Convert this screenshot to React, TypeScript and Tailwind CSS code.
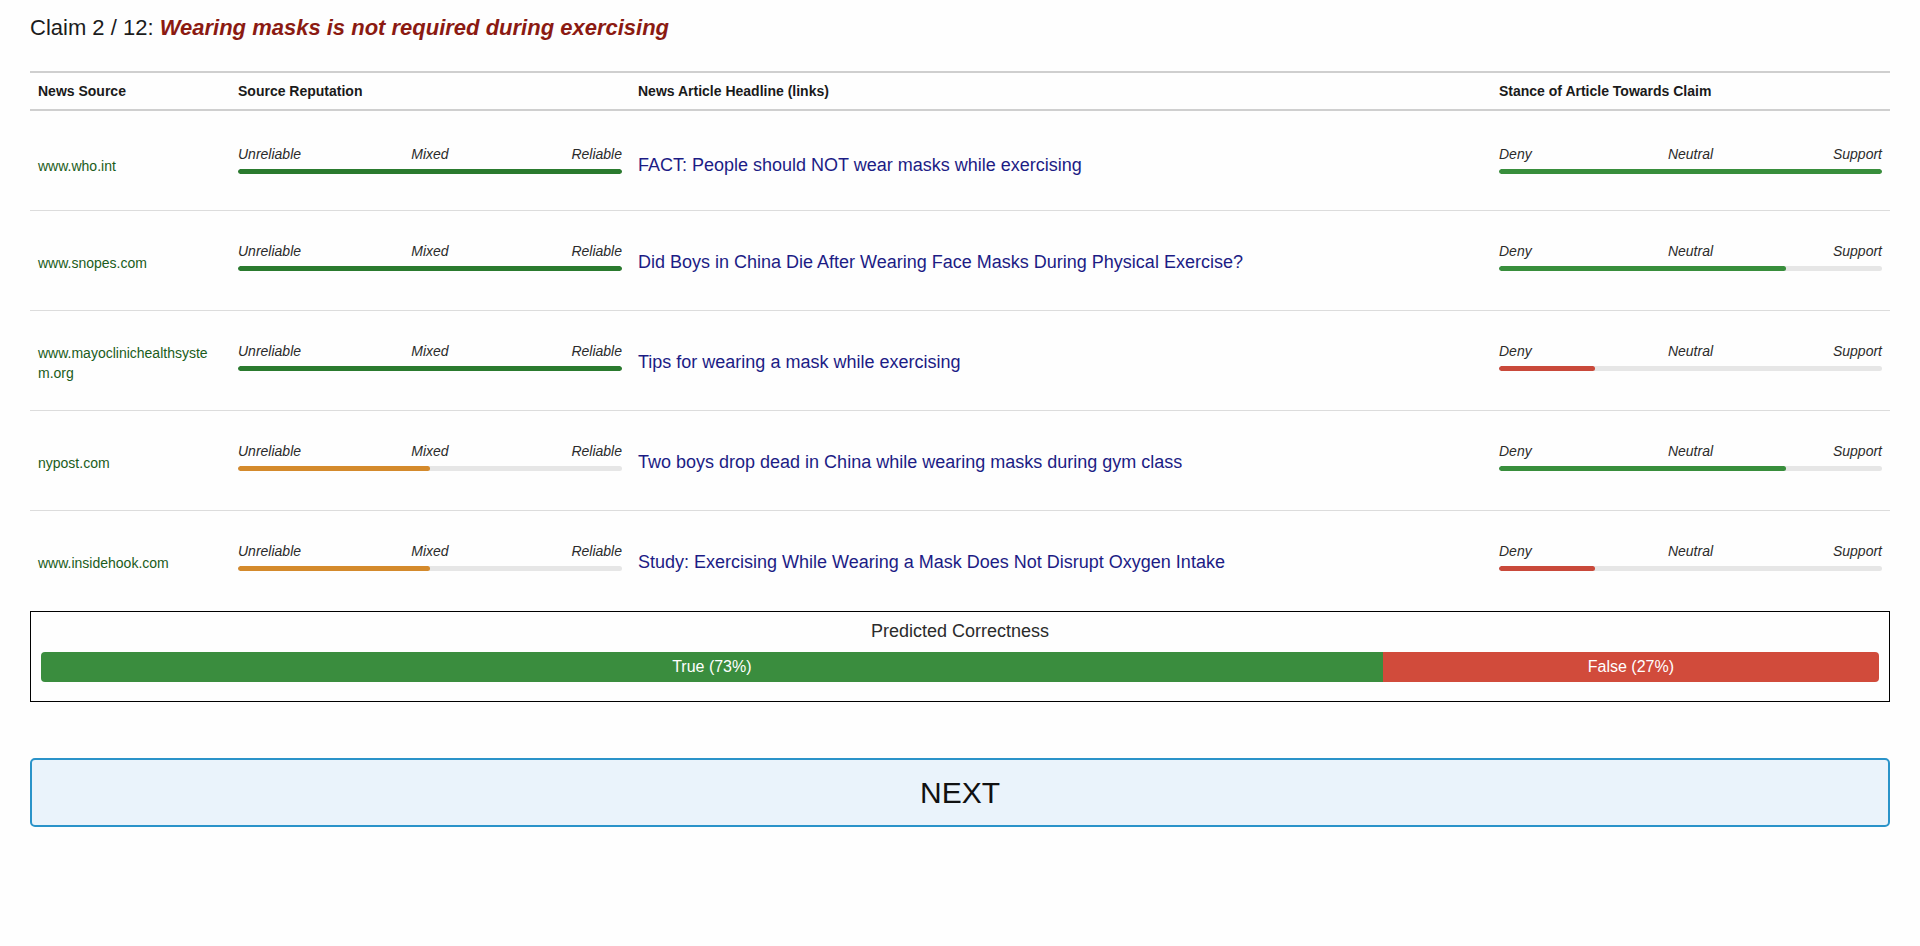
import { FC } from 'react'

type Row = {
  source: string
  headline: string
  reputation: number
  repColor: string
  stance: number
  stanceColor: string
}

const rows: Row[] = [
  {
    source: 'www.who.int',
    headline: 'FACT: People should NOT wear masks while exercising',
    reputation: 100,
    repColor: 'bg-[#2a7a2e]',
    stance: 100,
    stanceColor: 'bg-[#388e3c]',
  },
  {
    source: 'www.snopes.com',
    headline: 'Did Boys in China Die After Wearing Face Masks During Physical Exercise?',
    reputation: 100,
    repColor: 'bg-[#2a7a2e]',
    stance: 75,
    stanceColor: 'bg-[#388e3c]',
  },
  {
    source: 'www.mayoclinichealthsystem.org',
    headline: 'Tips for wearing a mask while exercising',
    reputation: 100,
    repColor: 'bg-[#2a7a2e]',
    stance: 25,
    stanceColor: 'bg-[#c9493a]',
  },
  {
    source: 'nypost.com',
    headline: 'Two boys drop dead in China while wearing masks during gym class',
    reputation: 50,
    repColor: 'bg-[#d48a2c]',
    stance: 75,
    stanceColor: 'bg-[#388e3c]',
  },
  {
    source: 'www.insidehook.com',
    headline: 'Study: Exercising While Wearing a Mask Does Not Disrupt Oxygen Intake',
    reputation: 50,
    repColor: 'bg-[#d48a2c]',
    stance: 25,
    stanceColor: 'bg-[#c9493a]',
  },
]

// three labels: left, centred on the middle of the bar, right
const Scale: FC<{ labels: [string, string, string]; value: number; color: string }> = ({ labels, value, color }) => (
  <div className="w-full mb-[8px]">
    <div className="grid grid-cols-[1fr_auto_1fr] text-[14px] leading-4 italic text-[#2b2b2b]">
      <span className="justify-self-start">{labels[0]}</span>
      <span>{labels[1]}</span>
      <span className="justify-self-end">{labels[2]}</span>
    </div>
    <div className="mt-[7px] h-[5px] w-full rounded-sm bg-[#e6e6e6] overflow-hidden">
      <div
        className={`h-full rounded-sm ${color}`}
        style={{ width: `${value}%` }}
      />
    </div>
  </div>
)

const App: FC = () => {
  return (
    <div className="min-h-[946px] bg-[#fefefe] px-[30px] pt-[15px] font-['Liberation_Sans',Arial,sans-serif] text-[#222]">
      <h1 className="text-[22px] leading-[25px] text-[#1c1c1c]">
        Claim 2 / 12:{' '}
        <span className="font-bold italic text-[#8b1a12]">Wearing masks is not required during exercising</span>
      </h1>

      <div className="mt-[31px]">
        <div className="grid grid-cols-[200px_400px_1fr_399px] border-y-2 border-[#cfcfcf] h-[40px] items-center text-[14px] font-bold text-[#1a1a1a]">
          <div className="px-2">News Source</div>
          <div className="px-2">Source Reputation</div>
          <div className="px-2">News Article Headline (links)</div>
          <div className="px-2">Stance of Article Towards Claim</div>
        </div>

        {rows.map((row, i) => (
          <div
            key={row.source}
            className={`grid grid-cols-[200px_400px_1fr_399px] items-center h-[100px] ${
              i < rows.length - 1 ? 'border-b border-[#dcdcdc]' : ''
            } ${i === 0 ? 'pt-[6px]' : ''}`}
          >
            <div className="px-2 pt-[4px] text-[14px] leading-[20px] text-[#1a5c1a] break-all">{row.source}</div>
            <div className="px-2">
              <Scale
                labels={['Unreliable', 'Mixed', 'Reliable']}
                value={row.reputation}
                color={row.repColor}
              />
            </div>
            <div className="px-2 pt-[4px]">
              <a
                href="#"
                className="text-[18px] leading-[22px] text-[#1c1c85]"
              >
                {row.headline}
              </a>
            </div>
            <div className="px-2">
              <Scale
                labels={['Deny', 'Neutral', 'Support']}
                value={row.stance}
                color={row.stanceColor}
              />
            </div>
          </div>
        ))}
      </div>

      <div className="border border-black px-[10px] pt-[8px] pb-[19px]">
        <div className="text-center text-[18px] leading-[22px] text-[#2b2b2b]">Predicted Correctness</div>
        <div className="mt-[10px] flex h-[30px] overflow-hidden rounded-[4px] text-[16px] text-white">
          <div className="flex items-center justify-center bg-[#3a8d3e] w-[73%]">True (73%)</div>
          <div className="flex items-center justify-center bg-[#d14b3b] w-[27%]">False (27%)</div>
        </div>
      </div>

      <button className="mt-[56px] flex h-[69px] w-full items-center justify-center rounded-[5px] border-2 border-[#2a93c9] bg-[#eaf3fb] text-[30px] text-[#111]">
        NEXT
      </button>
    </div>
  )
}

export default App
